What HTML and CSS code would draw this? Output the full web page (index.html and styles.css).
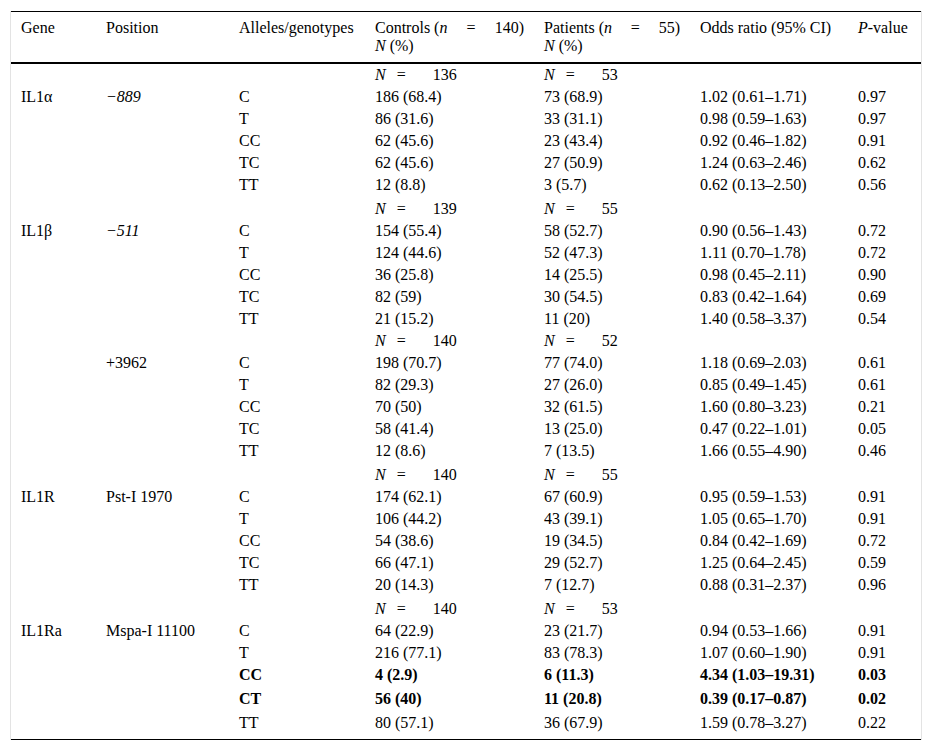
FILE: index.html
```html
<!DOCTYPE html>
<html>
<head>
<meta charset="utf-8">
<link rel="stylesheet" href="styles.css">
</head>
<body>
<div class="frame">
<table class="tbl">
<colgroup>
<col class="c-gene"><col class="c-pos"><col class="c-all"><col class="c-ctl"><col class="c-pat"><col class="c-or"><col class="c-p">
</colgroup>
<thead>
<tr>
<th>Gene</th>
<th>Position</th>
<th>Alleles/genotypes</th>
<th><div class="spread"><span>Controls (<i>n</i></span><span>=</span><span>140)</span></div><i>N</i> (%)</th>
<th><div class="spread"><span>Patients (<i>n</i></span><span>=</span><span>55)</span></div><i>N</i> (%)</th>
<th>Odds ratio (95% CI)</th>
<th><i>P</i>-value</th>
</tr>
</thead>
<tbody>
<tr><td></td><td></td><td></td><td><span class="nn"><i>N</i><span class="eq">=</span><span class="num">136</span></span></td><td><span class="nn"><i>N</i><span class="eq">=</span><span class="num">53</span></span></td><td></td><td></td></tr>
<tr><td>IL1α</td><td><i>−889</i></td><td>C</td><td>186 (68.4)</td><td>73 (68.9)</td><td>1.02 (0.61–1.71)</td><td>0.97</td></tr>
<tr><td></td><td></td><td>T</td><td>86 (31.6)</td><td>33 (31.1)</td><td>0.98 (0.59–1.63)</td><td>0.97</td></tr>
<tr><td></td><td></td><td>CC</td><td>62 (45.6)</td><td>23 (43.4)</td><td>0.92 (0.46–1.82)</td><td>0.91</td></tr>
<tr><td></td><td></td><td>TC</td><td>62 (45.6)</td><td>27 (50.9)</td><td>1.24 (0.63–2.46)</td><td>0.62</td></tr>
<tr><td></td><td></td><td>TT</td><td>12 (8.8)</td><td>3 (5.7)</td><td>0.62 (0.13–2.50)</td><td>0.56</td></tr>

<tr class="grp"><td></td><td></td><td></td><td><span class="nn"><i>N</i><span class="eq">=</span><span class="num">139</span></span></td><td><span class="nn"><i>N</i><span class="eq">=</span><span class="num">55</span></span></td><td></td><td></td></tr>
<tr><td>IL1β</td><td><i>−511</i></td><td>C</td><td>154 (55.4)</td><td>58 (52.7)</td><td>0.90 (0.56–1.43)</td><td>0.72</td></tr>
<tr><td></td><td></td><td>T</td><td>124 (44.6)</td><td>52 (47.3)</td><td>1.11 (0.70–1.78)</td><td>0.72</td></tr>
<tr><td></td><td></td><td>CC</td><td>36 (25.8)</td><td>14 (25.5)</td><td>0.98 (0.45–2.11)</td><td>0.90</td></tr>
<tr><td></td><td></td><td>TC</td><td>82 (59)</td><td>30 (54.5)</td><td>0.83 (0.42–1.64)</td><td>0.69</td></tr>
<tr><td></td><td></td><td>TT</td><td>21 (15.2)</td><td>11 (20)</td><td>1.40 (0.58–3.37)</td><td>0.54</td></tr>
<tr><td></td><td></td><td></td><td><span class="nn"><i>N</i><span class="eq">=</span><span class="num">140</span></span></td><td><span class="nn"><i>N</i><span class="eq">=</span><span class="num">52</span></span></td><td></td><td></td></tr>
<tr><td></td><td>+3962</td><td>C</td><td>198 (70.7)</td><td>77 (74.0)</td><td>1.18 (0.69–2.03)</td><td>0.61</td></tr>
<tr><td></td><td></td><td>T</td><td>82 (29.3)</td><td>27 (26.0)</td><td>0.85 (0.49–1.45)</td><td>0.61</td></tr>
<tr><td></td><td></td><td>CC</td><td>70 (50)</td><td>32 (61.5)</td><td>1.60 (0.80–3.23)</td><td>0.21</td></tr>
<tr><td></td><td></td><td>TC</td><td>58 (41.4)</td><td>13 (25.0)</td><td>0.47 (0.22–1.01)</td><td>0.05</td></tr>
<tr><td></td><td></td><td>TT</td><td>12 (8.6)</td><td>7 (13.5)</td><td>1.66 (0.55–4.90)</td><td>0.46</td></tr>

<tr class="grp"><td></td><td></td><td></td><td><span class="nn"><i>N</i><span class="eq">=</span><span class="num">140</span></span></td><td><span class="nn"><i>N</i><span class="eq">=</span><span class="num">55</span></span></td><td></td><td></td></tr>
<tr><td>IL1R</td><td>Pst-I 1970</td><td>C</td><td>174 (62.1)</td><td>67 (60.9)</td><td>0.95 (0.59–1.53)</td><td>0.91</td></tr>
<tr><td></td><td></td><td>T</td><td>106 (44.2)</td><td>43 (39.1)</td><td>1.05 (0.65–1.70)</td><td>0.91</td></tr>
<tr><td></td><td></td><td>CC</td><td>54 (38.6)</td><td>19 (34.5)</td><td>0.84 (0.42–1.69)</td><td>0.72</td></tr>
<tr><td></td><td></td><td>TC</td><td>66 (47.1)</td><td>29 (52.7)</td><td>1.25 (0.64–2.45)</td><td>0.59</td></tr>
<tr><td></td><td></td><td>TT</td><td>20 (14.3)</td><td>7 (12.7)</td><td>0.88 (0.31–2.37)</td><td>0.96</td></tr>

<tr class="grp"><td></td><td></td><td></td><td><span class="nn"><i>N</i><span class="eq">=</span><span class="num">140</span></span></td><td><span class="nn"><i>N</i><span class="eq">=</span><span class="num">53</span></span></td><td></td><td></td></tr>
<tr><td>IL1Ra</td><td>Mspa-I 11100</td><td>C</td><td>64 (22.9)</td><td>23 (21.7)</td><td>0.94 (0.53–1.66)</td><td>0.91</td></tr>
<tr><td></td><td></td><td>T</td><td>216 (77.1)</td><td>83 (78.3)</td><td>1.07 (0.60–1.90)</td><td>0.91</td></tr>
<tr class="bold"><td></td><td></td><td>CC</td><td>4 (2.9)</td><td>6 (11.3)</td><td>4.34 (1.03–19.31)</td><td>0.03</td></tr>
<tr class="bold"><td></td><td></td><td>CT</td><td>56 (40)</td><td>11 (20.8)</td><td>0.39 (0.17–0.87)</td><td>0.02</td></tr>
<tr class="last"><td></td><td></td><td>TT</td><td>80 (57.1)</td><td>36 (67.9)</td><td>1.59 (0.78–3.27)</td><td>0.22</td></tr>
</tbody>
</table>
</div>
</body>
</html>
```

FILE: styles.css
```css
html, body {
  margin: 0;
  padding: 0;
  background: #fff;
}

body {
  font-family: "Liberation Serif", "Times New Roman", serif;
  font-size: 16px;
  color: #000;
}

.frame {
  margin: 11px 0 0 10px;
  width: 910px;
  border-left: 1px solid #e3e3e3;
  border-right: 1px solid #e3e3e3;
}

.tbl {
  width: 910px;
  border-collapse: collapse;
  table-layout: fixed;
  border-top: 1px solid #000;
  border-bottom: 1px solid #000;
}

.c-gene { width: 85px; }
.c-pos { width: 133px; }
.c-all { width: 136px; }
.c-ctl { width: 169px; }
.c-pat { width: 156px; }
.c-or { width: 158px; }
.c-p { width: 73px; }

.tbl th {
  font-weight: normal;
  text-align: left;
  vertical-align: top;
  line-height: 18px;
  padding: 7px 10px 7px;
  border-bottom: 2px solid #000;
  white-space: nowrap;
}

.spread {
  display: flex;
  justify-content: space-between;
}

.tbl td {
  text-align: left;
  vertical-align: top;
  line-height: 18px;
  padding: 2px 10px;
  white-space: nowrap;
}

.tbl tr.grp td {
  padding-top: 4px;
}

.tbl tr.bold td {
  font-weight: bold;
  padding-bottom: 4px;
}

.tbl tr.last td {
  padding-bottom: 7px;
}

.nn {
  display: inline-flex;
}

.eq {
  margin-left: 11px;
}

.num {
  margin-left: 27px;
}
```
